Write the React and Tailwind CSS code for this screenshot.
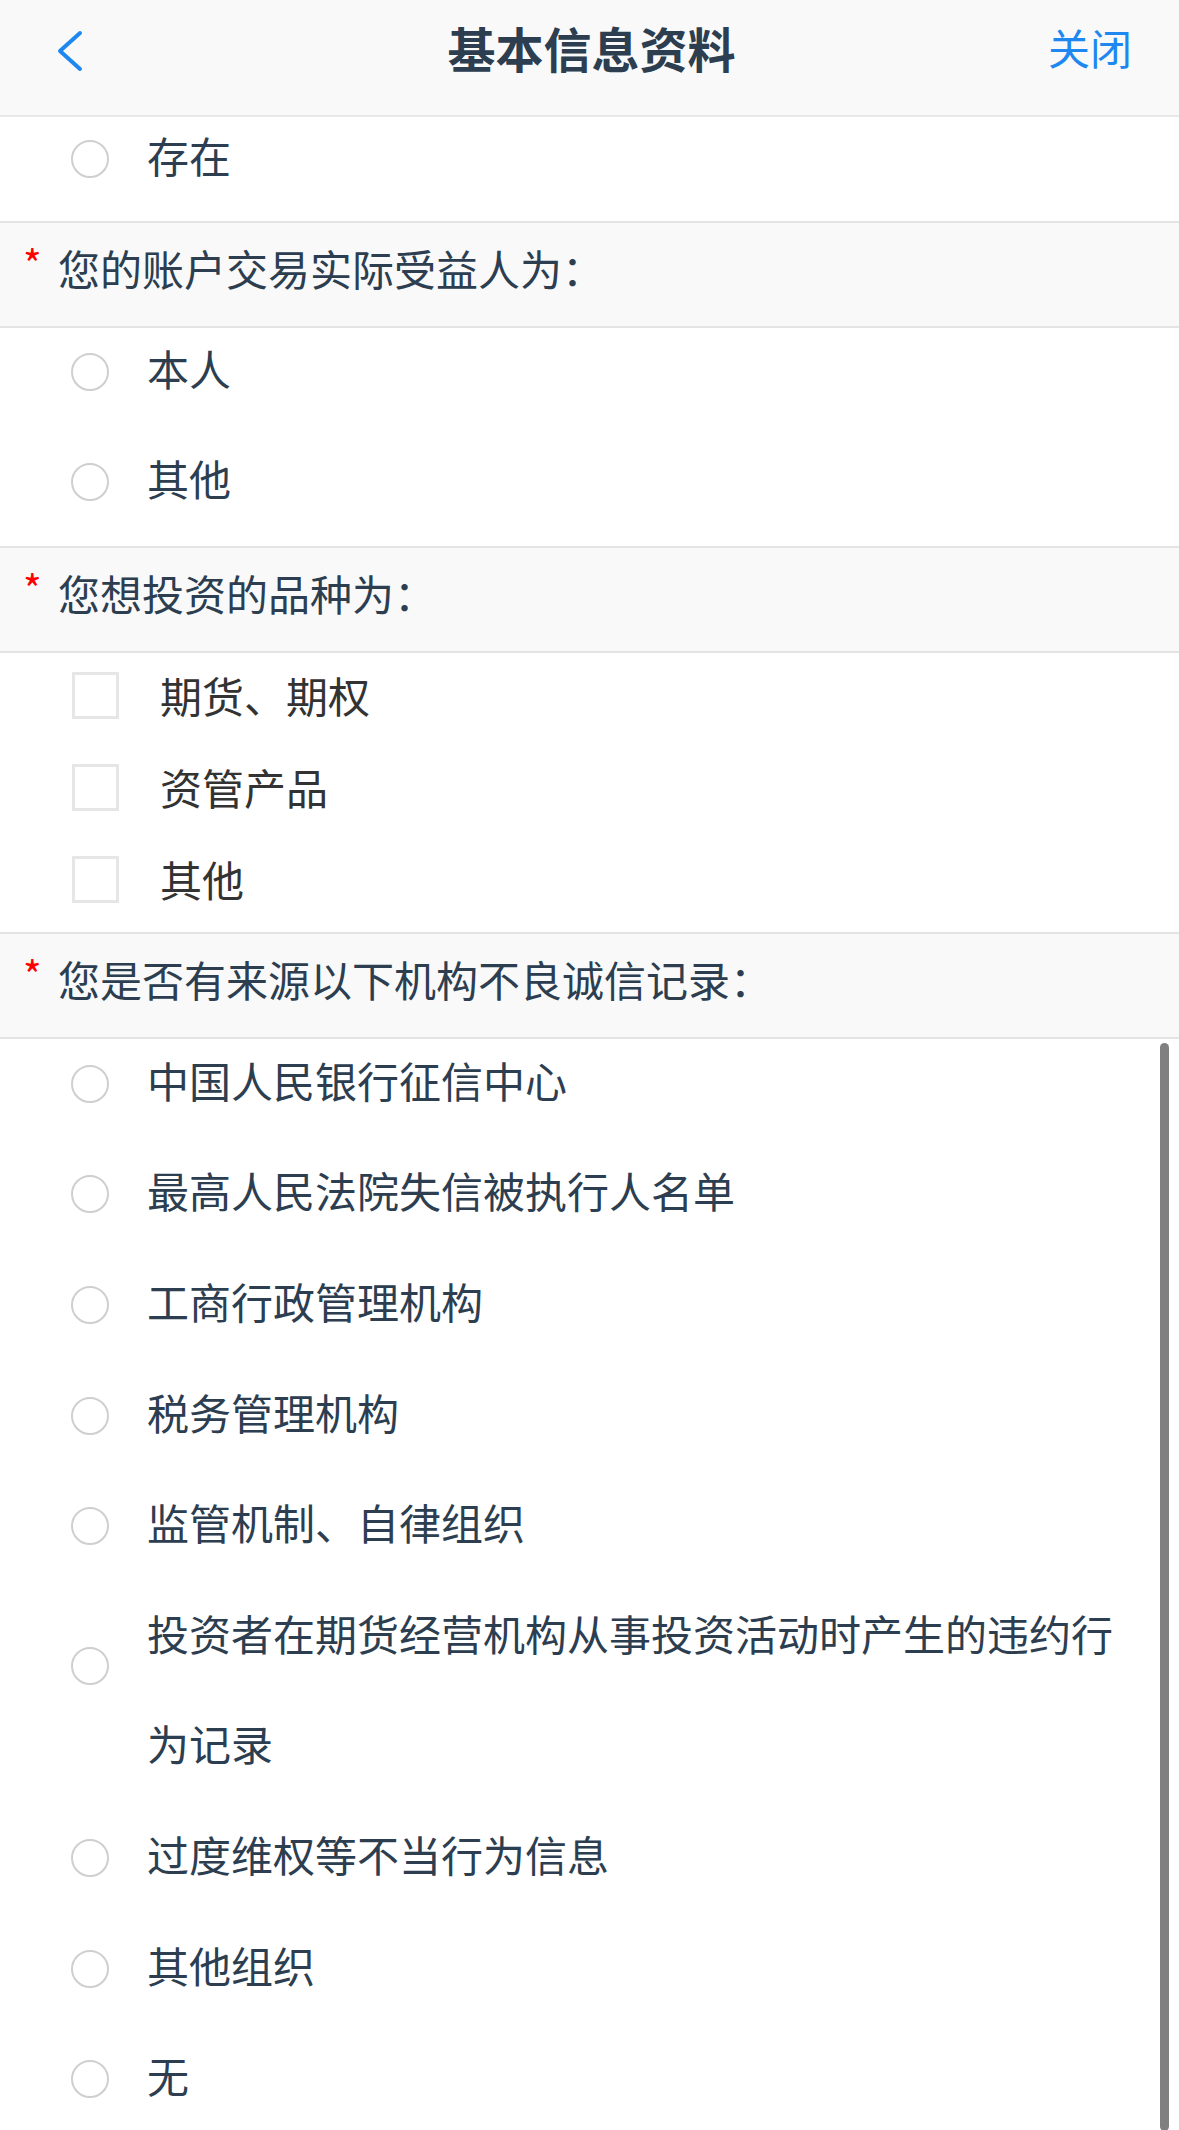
import React from 'react'

const font = "font-['Noto_Sans_CJK_SC','Noto_Sans',sans-serif]"

function Radio({ label, radioTop = 'mt-[40px]' }) {
  return (
    <div className="flex pl-[71px] pr-[40px]">
      <span className={`shrink-0 w-[38px] h-[38px] rounded-full border-2 border-[#cfcfcf] bg-white ${radioTop}`} />
      <span className="ml-[38px] text-[42px] leading-[110.6px] text-[#2c3e50]">{label}</span>
    </div>
  )
}

function Check({ label }) {
  return (
    <div className="flex items-center h-[92px] pl-[72px]">
      <span className="shrink-0 w-[47px] h-[47px] border-[3px] border-[#e6e6e6] bg-white -mt-[6px]" />
      <span className="ml-[41px] text-[42px] leading-none text-[#333333] -mt-[8px]">{label}</span>
    </div>
  )
}

function Question({ children }) {
  return (
    <div className="h-[107px] flex items-center pb-3 bg-[#f9f9f9] border-y-2 border-[#e4e4e4]">
      <span className="w-[58px] pl-[23px] text-[40px] leading-none text-[#ff0000] -mt-[10px]">*</span>
      <span className="text-[42px] leading-none text-[#2c3e50]">{children}</span>
    </div>
  )
}

export default function App() {
  const records = [
    '中国人民银行征信中心',
    '最高人民法院失信被执行人名单',
    '工商行政管理机构',
    '税务管理机构',
    '监管机制、自律组织',
  ]
  const records2 = ['过度维权等不当行为信息', '其他组织', '无']

  return (
    <div className={`w-[1179px] h-[2130px] overflow-hidden bg-white ${font}`}>
      <header className="h-[117px] bg-[#f9f9f9] border-b-2 border-[#e8e8e8]">
        <div className="h-[94px] flex items-center justify-between pl-[55px] pr-[47px]">
          <svg width="28" height="42" viewBox="0 0 28 42" fill="none" className="mt-[8px]">
            <path d="M25 3 L5 21 L25 39" stroke="#1e88f0" strokeWidth="4" strokeLinecap="round" strokeLinejoin="round" />
          </svg>
          <h1 className="text-[48px] leading-none font-bold text-[#2c3e50] pl-[52px]">基本信息资料</h1>
          <button className="text-[42px] leading-none text-[#1e88f0]">关闭</button>
        </div>
      </header>

      <div className="flex flex-col pb-[10px]">
        <div className="-mt-[17px]">
          <Radio label="存在" />
        </div>
      </div>

      <Question>您的账户交易实际受益人为：</Question>
      <div className="flex flex-col pb-[12px]">
        <div className="-mt-[15px]">
          <Radio label="本人" />
          <Radio label="其他" />
        </div>
      </div>

      <Question>您想投资的品种为：</Question>
      <div className="pb-[3px]">
        <Check label="期货、期权" />
        <Check label="资管产品" />
        <Check label="其他" />
      </div>

      <Question>您是否有来源以下机构不良诚信记录：</Question>
      <div className="relative flex flex-col">
        <div className="-mt-[14px]">
          {records.map((r) => (
            <Radio key={r} label={r} />
          ))}
          <Radio label="投资者在期货经营机构从事投资活动时产生的违约行为记录" radioTop="mt-[69px]" />
          {records2.map((r) => (
            <Radio key={r} label={r} />
          ))}
        </div>
        <div className="absolute right-[10px] top-[4px] bottom-0 w-[9px] rounded-full bg-[#808080]" />
      </div>
    </div>
  )
}
